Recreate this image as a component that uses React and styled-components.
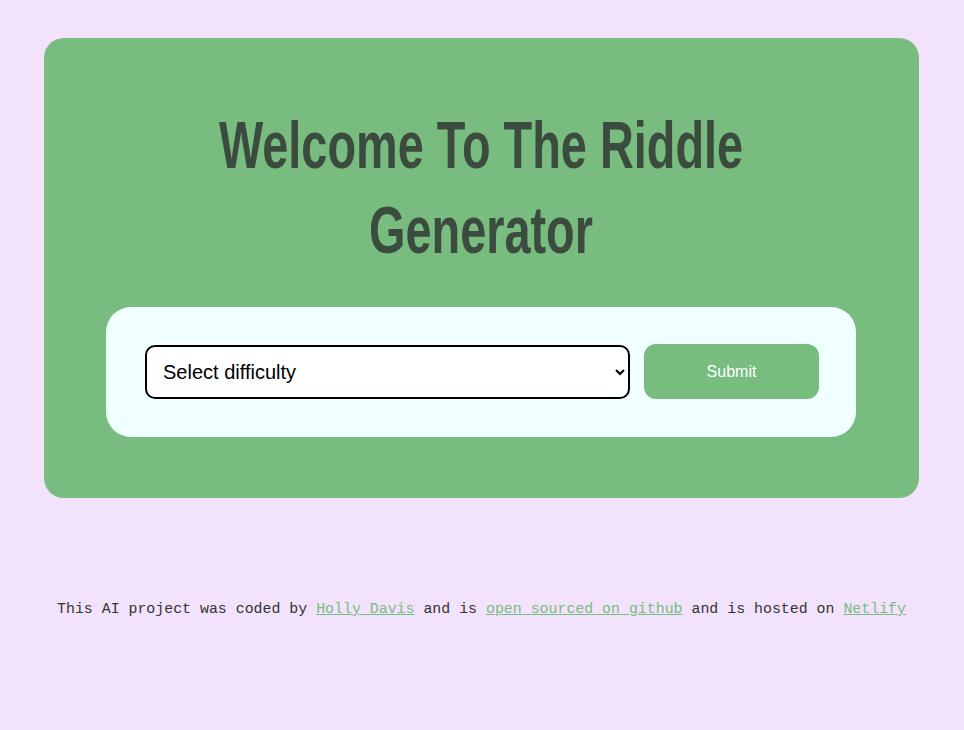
import styled, { createGlobalStyle } from "styled-components";

const GlobalStyle = createGlobalStyle`
  html, body {
    margin: 0;
    padding: 0;
    background: #f3e2fb;
  }
  body {
    font-family: "Liberation Sans", Arial, sans-serif;
  }
`;

const Page = styled.div`
  padding: 38px 45px 0 44px;
  min-height: 730px;
  box-sizing: border-box;
`;

const Card = styled.div`
  background: #78bc80;
  border-radius: 20px;
  padding: 62px 63px 61px 62px;
`;

// no condensed face installed, so squeeze a bold sans to get the tall narrow look
const Title = styled.h1`
  margin: 3px 0 34px;
  text-align: center;
  font-family: "Liberation Sans", Arial, sans-serif;
  font-weight: 700;
  font-size: 66px;
  line-height: 85px;
  color: #3b4c3e;
`;

const TitleLine = styled.span`
  display: block;
  white-space: nowrap;
  transform: scaleX(0.71);
`;

const FormBox = styled.form`
  background: #f0ffff;
  border-radius: 25px;
  padding: 37px 37px 38px 39px;
  display: flex;
  align-items: center;
  gap: 14px;
`;

const Select = styled.select`
  flex: 1;
  height: 54px;
  border: 2px solid #000;
  border-radius: 10px;
  padding: 0 10px 0 12px;
  background: #fff;
  font-family: "Liberation Sans", Arial, sans-serif;
  font-size: 20px;
  color: #000;
`;

const SubmitBtn = styled.button`
  width: 175px;
  height: 55px;
  border: 0;
  border-radius: 12px;
  background: #78bc80;
  color: #fff;
  font-family: "Liberation Sans", Arial, sans-serif;
  font-size: 16px;
`;

const Footer = styled.p`
  margin: 103px 0 0;
  text-align: center;
  font-family: "Liberation Mono", "Courier New", monospace;
  font-size: 14.9px;
  color: #333;
  > a {
    color: #78bc80;
  }
`;

export default function App() {
  return (
    <>
      <GlobalStyle />
      <Page>
        <Card>
          <Title>
            <TitleLine>Welcome To The Riddle</TitleLine>
            <TitleLine>Generator</TitleLine>
          </Title>
          <FormBox onSubmit={(e) => e.preventDefault()}>
            <Select defaultValue="">
              <option value="">Select difficulty</option>
              <option value="easy">Easy</option>
              <option value="medium">Medium</option>
              <option value="hard">Hard</option>
            </Select>
            <SubmitBtn type="submit">Submit</SubmitBtn>
          </FormBox>
        </Card>
        <Footer>
          This AI project was coded by <a href="#">Holly Davis</a> and is{" "}
          <a href="#">open sourced on github</a> and is hosted on{" "}
          <a href="#">Netlify</a>
        </Footer>
      </Page>
    </>
  );
}
